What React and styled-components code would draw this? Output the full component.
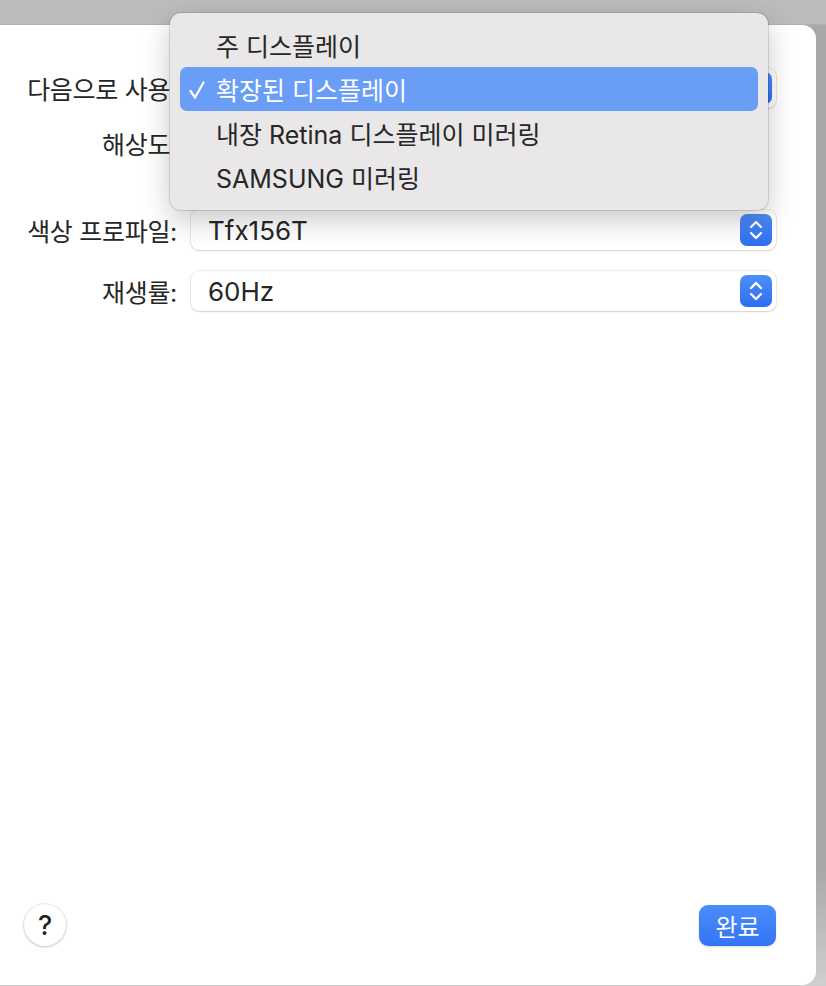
import styled, { createGlobalStyle } from "styled-components";

const GlobalStyle = createGlobalStyle`
  body {
    margin: 0;
    background: #a9a8a9;
    font-family: "Inter", "Noto Sans CJK KR", sans-serif;
    color: #262626;
  }
`;

const Page = styled.div`
  position: relative;
  width: 826px;
  height: 986px;
  display: flex;
  flex-direction: column;
  overflow: hidden;
  background: linear-gradient(to bottom, #a9a8a9 0%, #a9a8a9 88%, #cfcfcf 100%);
`;

const TopStrip = styled.div`
  height: 25px;
  flex-shrink: 0;
  background: #bdbcbd;
  box-shadow: inset 0 -1px 0 rgba(0, 0, 0, 0.06);
`;

const Body = styled.div`
  display: flex;
  flex: 1;
`;

const Sheet = styled.section`
  width: 816px;
  height: 960px;
  box-sizing: border-box;
  background: #fff;
  border-radius: 0 14px 14px 0;
  display: flex;
  flex-direction: column;
  padding: 43px 40px 39px 20px;
`;

const Form = styled.div`
  display: flex;
  flex-direction: column;
  flex: 1;
`;

const Row = styled.div`
  display: grid;
  grid-template-columns: 157px 1fr;
  column-gap: 14px;
  align-items: center;
  height: 40px;
  margin-top: ${(p) => p.$top || 0}px;
`;

const Label = styled.div`
  font-size: 25px;
  text-align: right;
  white-space: nowrap;
  letter-spacing: -0.3px;
`;

const Select = styled.div`
  height: 40px;
  box-sizing: border-box;
  background: #fff;
  border-radius: 8px;
  box-shadow: 0 0 0 1px rgba(0, 0, 0, 0.07), 0 1px 2px rgba(0, 0, 0, 0.12);
  display: flex;
  align-items: center;
  justify-content: space-between;
  padding: 0 4px 0 17px;
  font-size: 26px;
`;

const Stepper = styled.div`
  width: 32px;
  height: 32px;
  border-radius: 7px;
  background: linear-gradient(to bottom, #4d8ef9, #2f6ef2);
  display: flex;
  align-items: center;
  justify-content: center;
  margin-left: auto;
`;

const Footer = styled.footer`
  display: flex;
  align-items: center;
  justify-content: space-between;
  margin-left: 4px;
`;

const HelpButton = styled.button`
  width: 42px;
  height: 42px;
  border-radius: 50%;
  border: none;
  background: #fff;
  box-shadow: 0 0 0 1px rgba(0, 0, 0, 0.06), 0 1px 3px rgba(0, 0, 0, 0.2);
  font-family: "Inter", sans-serif;
  font-size: 27px;
  font-weight: 500;
  color: #222;
  display: flex;
  align-items: center;
  justify-content: center;
  padding: 0;
`;

const DoneButton = styled.button`
  width: 77px;
  height: 41px;
  border: none;
  border-radius: 9px;
  background: linear-gradient(to bottom, #4b8df9, #3374f5);
  color: #fff;
  font-family: "Noto Sans CJK KR", sans-serif;
  font-size: 24px;
  padding: 0;
  box-shadow: 0 1px 2px rgba(0, 0, 0, 0.15);
`;

const Menu = styled.ul`
  position: absolute;
  left: 170px;
  top: 13px;
  width: 598px;
  box-sizing: border-box;
  margin: 0;
  padding: 10px 10px 11px;
  list-style: none;
  background: #e9e7e8;
  border-radius: 11px;
  box-shadow: 0 0 0 1px rgba(0, 0, 0, 0.12), 0 10px 28px rgba(0, 0, 0, 0.22);
`;

const MenuItem = styled.li`
  height: 44px;
  border-radius: 7px;
  display: flex;
  align-items: center;
  padding-left: 36px;
  position: relative;
  font-size: 25px;
  color: ${(p) => (p.$active ? "#fff" : "#262626")};
  background: ${(p) => (p.$active ? "#699df6" : "transparent")};
`;

const Check = styled.svg`
  position: absolute;
  left: 8px;
  top: 13px;
`;

const Chevrons = () => (
  <svg width="16" height="24" viewBox="0 0 16 24" fill="none">
    <path d="M3 9 L8 4 L13 9" stroke="#fff" strokeWidth="2.4" strokeLinecap="round" strokeLinejoin="round" />
    <path d="M3 15 L8 20 L13 15" stroke="#fff" strokeWidth="2.4" strokeLinecap="round" strokeLinejoin="round" />
  </svg>
);

const items = ["주 디스플레이", "확장된 디스플레이", "내장 Retina 디스플레이 미러링", "SAMSUNG 미러링"];

const App = () => {
  return (
    <Page>
      <GlobalStyle />
      <TopStrip />
      <Body>
        <Sheet>
          <Form>
            <Row>
              <Label>다음으로 사용:</Label>
              <Select>
                <Stepper>
                  <Chevrons />
                </Stepper>
              </Select>
            </Row>
            <Row $top={15}>
              <Label>해상도:</Label>
              <div />
            </Row>
            <Row $top={47}>
              <Label>색상 프로파일:</Label>
              <Select>
                Tfx156T
                <Stepper>
                  <Chevrons />
                </Stepper>
              </Select>
            </Row>
            <Row $top={21}>
              <Label>재생률:</Label>
              <Select>
                60Hz
                <Stepper>
                  <Chevrons />
                </Stepper>
              </Select>
            </Row>
          </Form>
          <Footer>
            <HelpButton>?</HelpButton>
            <DoneButton>완료</DoneButton>
          </Footer>
        </Sheet>
      </Body>
      <Menu>
        {items.map((item, i) => (
          <MenuItem key={item} $active={i === 1}>
            {i === 1 && (
              <Check width="18" height="20" viewBox="0 0 18 20" fill="none">
                <path d="M2.5 11 L7 17.5 L15.5 2.5" stroke="#fff" strokeWidth="2.2" strokeLinecap="round" strokeLinejoin="round" />
              </Check>
            )}
            {item}
          </MenuItem>
        ))}
      </Menu>
    </Page>
  );
};

export default App;
